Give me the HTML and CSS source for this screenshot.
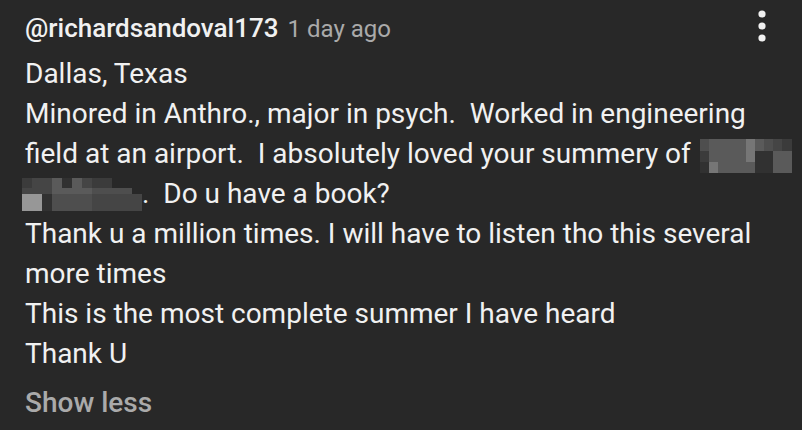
FILE: index.html
```html
<!DOCTYPE html>
<html lang="en">
<head>
    <meta charset="UTF-8">
    <title>Comment</title>
    <link rel="stylesheet" href="styles.css">
</head>
<body>
    <div class="comment">
        <div class="comment-header">
            <span class="author">@richardsandoval173</span>
            <span class="time">1 day ago</span>
            <button class="menu" aria-label="Action menu">
                <svg width="10" height="34" viewBox="0 0 10 34">
                    <circle cx="5" cy="5" r="3.6" fill="#f1f1f1"/>
                    <circle cx="5" cy="17" r="3.6" fill="#f1f1f1"/>
                    <circle cx="5" cy="29" r="3.6" fill="#f1f1f1"/>
                </svg>
            </button>
        </div>
        <div class="comment-text">
            <p class="line">Dallas, Texas</p>
            <p class="line">Minored in Anthro., major in psych.  Worked in engineering</p>
            <p class="line">field at an airport.  I absolutely loved your summery of <span class="blur blur-a"><span class="cells"><i class="s3"></i><i class="s4"></i><i class="s4"></i><i class="s4"></i><i class="s4"></i><i class="s6"></i><i class="s4"></i><i class="s3"></i><i class="s2"></i><i class="s1"></i><i class="s1"></i><i class="s4"></i><i class="s4"></i><i class="s4"></i><i class="s4"></i><i class="s6"></i><i class="s0"></i><i class="s0"></i><i class="s4"></i><i class="s4"></i><i class="s0"></i><i class="s6"></i><i class="s4"></i><i class="s4"></i><i class="s4"></i><i class="s4"></i><i class="s0"></i><i class="s0"></i><i class="s4"></i><i class="s4"></i></span></span></p>
            <p class="line"><span class="blur blur-b"><span class="cells"><i class="s1"></i><i class="s2"></i><i class="s2"></i><i class="s4"></i><i class="s0"></i><i class="s4"></i><i class="s2"></i><i class="s1"></i><i class="s1"></i><i class="bg"></i><i class="bg"></i><i class="bg"></i><i class="s2"></i><i class="s2"></i><i class="s2"></i><i class="s4"></i><i class="s4"></i><i class="s4"></i><i class="s4"></i><i class="s3"></i><i class="s3"></i><i class="s3"></i><i class="s3"></i><i class="bg"></i><i class="s7"></i><i class="s7"></i><i class="s0"></i><i class="s3"></i><i class="s3"></i><i class="s3"></i><i class="s3"></i><i class="s2"></i><i class="s2"></i><i class="s2"></i><i class="s2"></i><i class="s2"></i></span></span>.  Do u have a book?</p>
            <p class="line">Thank u a million times. I will have to listen tho this several</p>
            <p class="line">more times</p>
            <p class="line">This is the most complete summer I have heard</p>
            <p class="line">Thank U</p>
        </div>
        <button class="show-less">Show less</button>
    </div>
</body>
</html>
```

FILE: styles.css
```css
body {
    margin: 0;
    background-color: #282828;
    font-family: Roboto, "Liberation Sans", sans-serif;
    color: #f1f1f1;
}
.comment {
    padding: 8px 0 0 25px;
}
.comment-header {
    display: flex;
    align-items: baseline;
    gap: 9px;
    font-size: 24px;
    line-height: 40px;
    height: 40px;
}
.author {
    font-size: 26px;
    font-weight: 500;
}
.time {
    color: #aaa;
}
.menu {
    margin-left: auto;
    margin-right: 35px;
    align-self: flex-start;
    margin-top: 1px;
    background: none;
    border: none;
    padding: 0;
    width: 10px;
    height: 34px;
}
.comment-text {
    margin-top: 6px;
    font-size: 28px;
    line-height: 40px;
}
.line {
    margin: 0;
    white-space: pre;
}
.blur {
    display: inline-block;
    overflow: hidden;
}
.cells {
    display: grid;
}
.cells i {
    display: block;
}
.blur-a {
    vertical-align: -10px;
    margin-left: 2px;
}
.blur-a .cells {
    grid-template-columns: repeat(10, 9.2px);
    grid-template-rows: 12px 11px 11px;
}
.blur-b {
    vertical-align: -8px;
    margin-left: -3px;
}
.blur-b .cells {
    grid-template-columns: repeat(12, 10px);
    grid-template-rows: 10px 6px 17px;
}
.s0 { background: #313131; }
.s1 { background: #3b3b3b; }
.s2 { background: #454545; }
.s3 { background: #4e4e4e; }
.s4 { background: #5a5a5a; }
.s6 { background: #767676; }
.s7 { background: #979797; }
.bg { background: transparent; }
.show-less {
    display: block;
    margin-top: 9px;
    padding: 0;
    background: none;
    border: none;
    font-family: inherit;
    font-size: 28px;
    font-weight: 500;
    line-height: 40px;
    color: #aaa;
}
```
